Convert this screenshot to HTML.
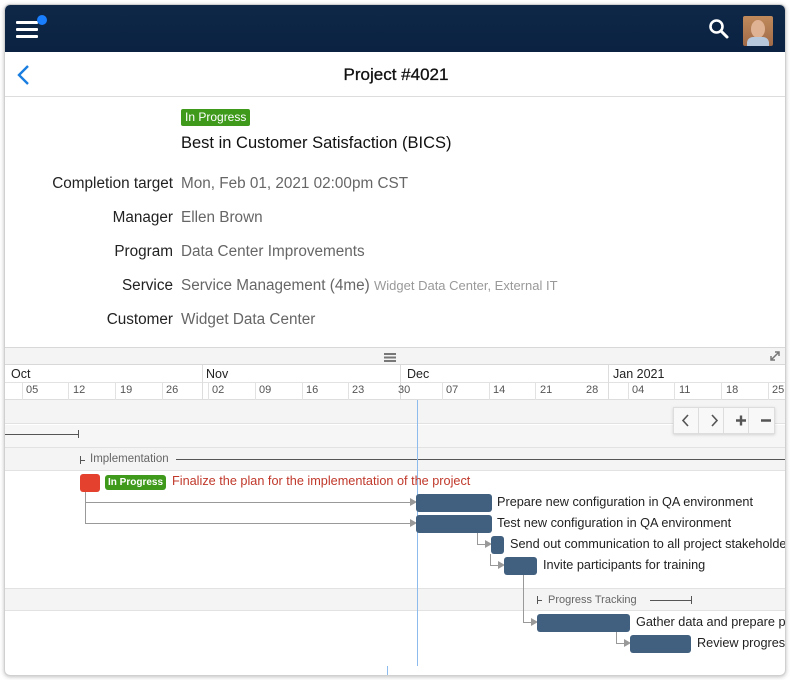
<!DOCTYPE html>
<html><head><meta charset="utf-8"><style>
*{margin:0;padding:0;box-sizing:border-box}
body{width:790px;height:680px;background:#fff;font-family:"Liberation Sans",sans-serif;position:relative;overflow:hidden}
.a{position:absolute;white-space:nowrap}
.card{position:absolute;left:4px;top:4px;width:782px;height:672px;border:1px solid #d0d0d0;border-radius:6px;overflow:hidden;box-shadow:0 1px 4px rgba(0,0,0,.25);background:#fff}
.lbl{position:absolute;right:612px;font-size:15.3px;color:#222}
.val{position:absolute;left:176px;font-size:15.3px;color:#666}
.wk{position:absolute;top:379px;font-size:11px;color:#555}
.tk{position:absolute;top:378px;width:1px;height:17px;background:#e2e2e2}
.bar{position:absolute;background:#41607f;border-radius:3px;height:18px}
.bt{position:absolute;font-size:12.7px;color:#222;white-space:nowrap}
.hl{position:absolute;height:1px;background:#999}
.vl{position:absolute;width:1px;background:#999}
.ar{position:absolute;width:0;height:0;border-top:4px solid transparent;border-bottom:4px solid transparent;border-left:7px solid #999}
</style></head><body>
<div class="card">
<div class="a" style="left:0;top:0;width:782px;height:47px;background:linear-gradient(#0f2848,#0b2242)"></div>
<div class="a" style="left:11px;top:16px;width:22px;height:3px;background:#fff;border-radius:1px"></div>
<div class="a" style="left:11px;top:23px;width:22px;height:3px;background:#fff;border-radius:1px"></div>
<div class="a" style="left:11px;top:30px;width:22px;height:3px;background:#fff;border-radius:1px"></div>
<div class="a" style="left:32px;top:10px;width:10px;height:10px;background:#1a7fff;border-radius:50%"></div>
<svg class="a" style="left:703px;top:13px" width="22" height="22" viewBox="0 0 22 22"><circle cx="8.5" cy="8.5" r="6" fill="none" stroke="#fff" stroke-width="2.6"/><line x1="13" y1="13" x2="19" y2="19" stroke="#fff" stroke-width="3" stroke-linecap="round"/></svg>
<div class="a" style="left:738px;top:11px;width:30px;height:30px;background:linear-gradient(#c08a5c,#a06a48);border-radius:2px;overflow:hidden">
<div class="a" style="left:8px;top:4px;width:14px;height:18px;background:#e0b294;border-radius:50%"></div>
<div class="a" style="left:4px;top:21px;width:22px;height:10px;background:#b8c8dc;border-radius:6px 6px 0 0"></div></div>
<svg class="a" style="left:11px;top:58px" width="16" height="24" viewBox="0 0 16 24"><path d="M12 3 L3 12 L12 21" fill="none" stroke="#1a7ee0" stroke-width="2.4"/></svg>
<div class="a" style="left:0;width:782px;top:60px;text-align:center;font-size:17px;color:#111;-webkit-text-stroke:0.3px #111">Project #4021</div>
<div class="a" style="left:0;top:91px;width:782px;height:1px;background:#ddd"></div>
<div class="a" style="left:176px;top:104px;background:#3f9a1c;color:#fff;font-size:12px;padding:1px 4px;border-radius:2px;line-height:15px">In Progress</div>
<div class="a" style="left:176px;top:129px;font-size:16.5px;color:#111">Best in Customer Satisfaction (BICS)</div>
<div class="lbl" style="top:170px">Completion target</div><div class="val" style="top:170px">Mon, Feb 01, 2021 02:00pm CST</div>
<div class="lbl" style="top:204px">Manager</div><div class="val" style="top:204px">Ellen Brown</div>
<div class="lbl" style="top:238px">Program</div><div class="val" style="top:238px">Data Center Improvements</div>
<div class="lbl" style="top:272px">Service</div><div class="val" style="top:272px">Service Management (4me) <span style="font-size:13px;color:#999">Widget Data Center, External IT</span></div>
<div class="lbl" style="top:306px">Customer</div><div class="val" style="top:306px">Widget Data Center</div>
<div class="a" style="left:0;top:342px;width:782px;height:18px;background:#f4f4f4;border-top:1px solid #d8d8d8;border-bottom:1px solid #d8d8d8"></div>
<div class="a" style="left:379px;top:348px;width:12px;height:1.5px;background:#777;box-shadow:0 3.5px 0 #777,0 7px 0 #777"></div>
<svg class="a" style="left:764px;top:345px" width="12" height="12"><path d="M2 10 L10 2 M6 2 H10 V6 M2 6 V10 H6" fill="none" stroke="#777" stroke-width="1.5"/></svg>
<div class="a" style="left:0;top:360px;width:782px;height:35px;background:#fff;border-bottom:1px solid #ddd"></div>
<div class="a" style="left:0;top:377px;width:782px;height:1px;background:#e2e2e2"></div>
<div class="a" style="left:197px;top:360px;width:1px;height:35px;background:#ddd"></div>
<div class="a" style="left:395px;top:360px;width:1px;height:35px;background:#ddd"></div>
<div class="a" style="left:603px;top:360px;width:1px;height:35px;background:#ddd"></div>
<div class="a" style="left:6px;top:362px;font-size:12.5px;color:#222">Oct</div>
<div class="a" style="left:201px;top:362px;font-size:12.5px;color:#222">Nov</div>
<div class="a" style="left:402px;top:362px;font-size:12.5px;color:#222">Dec</div>
<div class="a" style="left:608px;top:362px;font-size:12.5px;color:#222">Jan 2021</div>
<div class="tk" style="left:17px"></div><div class="wk" style="left:21px">05</div>
<div class="tk" style="left:63px"></div><div class="wk" style="left:68px">12</div>
<div class="tk" style="left:110px"></div><div class="wk" style="left:115px">19</div>
<div class="tk" style="left:157px"></div><div class="wk" style="left:161px">26</div>
<div class="tk" style="left:203px"></div><div class="wk" style="left:207px">02</div>
<div class="tk" style="left:250px"></div><div class="wk" style="left:254px">09</div>
<div class="tk" style="left:297px"></div><div class="wk" style="left:301px">16</div>
<div class="tk" style="left:343px"></div><div class="wk" style="left:347px">23</div>
<div class="wk" style="left:393px">30</div>
<div class="tk" style="left:437px"></div><div class="wk" style="left:441px">07</div>
<div class="tk" style="left:484px"></div><div class="wk" style="left:488px">14</div>
<div class="tk" style="left:530px"></div><div class="wk" style="left:535px">21</div>
<div class="wk" style="left:581px">28</div>
<div class="tk" style="left:623px"></div><div class="wk" style="left:627px">04</div>
<div class="tk" style="left:669px"></div><div class="wk" style="left:674px">11</div>
<div class="tk" style="left:716px"></div><div class="wk" style="left:721px">18</div>
<div class="tk" style="left:763px"></div><div class="wk" style="left:767px">25</div>
<div class="a" style="left:0;top:395px;width:782px;height:24px;background:#f4f4f4;border-bottom:1px solid #e2e2e2"></div>
<div class="a" style="left:0;top:420px;width:782px;height:23px;background:#f6f6f6;border-bottom:1px solid #e2e2e2"></div>
<div class="a" style="left:0;top:443px;width:782px;height:23px;background:#f4f4f4;border-bottom:1px solid #e2e2e2"></div>
<div class="a" style="left:0;top:583px;width:782px;height:23px;background:#f4f4f4;border-top:1px solid #e2e2e2;border-bottom:1px solid #e2e2e2"></div>
<div class="a" style="left:0;top:429px;width:74px;height:1px;background:#555"></div>
<div class="a" style="left:73px;top:425px;width:1px;height:8px;background:#555"></div>
<div class="a" style="left:75px;top:451px;width:1px;height:8px;background:#555"></div>
<div class="a" style="left:75px;top:455px;width:5px;height:1px;background:#555"></div>
<div class="a" style="left:85px;top:448px;font-size:11.5px;color:#666">Implementation</div>
<div class="a" style="left:171px;top:454px;width:611px;height:1px;background:#555"></div>
<div class="a" style="left:532px;top:591px;width:1px;height:8px;background:#555"></div>
<div class="a" style="left:532px;top:595px;width:5px;height:1px;background:#555"></div>
<div class="a" style="left:543px;top:589px;font-size:11px;color:#666">Progress Tracking</div>
<div class="a" style="left:645px;top:595px;width:41px;height:1px;background:#555"></div>
<div class="a" style="left:686px;top:591px;width:1px;height:8px;background:#555"></div>
<div class="a" style="left:412px;top:395px;width:1px;height:266px;background:#8dbbee"></div>
<div class="a" style="left:382px;top:661px;width:1px;height:12px;background:#8dbbee"></div>
<div class="a" style="left:668px;top:402px;width:102px;height:27px;background:#f8f8f8;border:1px solid #ddd;box-shadow:0 1px 3px rgba(0,0,0,.15)"></div>
<div class="a" style="left:693px;top:403px;width:1px;height:25px;background:#ddd"></div>
<div class="a" style="left:718px;top:403px;width:1px;height:25px;background:#ddd"></div>
<div class="a" style="left:743px;top:403px;width:1px;height:25px;background:#ddd"></div>
<svg class="a" style="left:668px;top:402px" width="102" height="27"><path d="M15 8 L10 13.5 L15 19 M39 8 L44 13.5 L39 19" fill="none" stroke="#555" stroke-width="1.6"/><path d="M63 13.5 H73 M68 8.5 V18.5 M88 13.5 H98" stroke="#555" stroke-width="2.4"/></svg>
<div class="vl" style="left:80px;top:486px;height:33px"></div>
<div class="hl" style="left:80px;top:497px;width:326px"></div><div class="ar" style="left:405px;top:493px"></div>
<div class="hl" style="left:80px;top:518px;width:326px"></div><div class="ar" style="left:405px;top:514px"></div>
<div class="vl" style="left:472px;top:528px;height:12px"></div>
<div class="hl" style="left:472px;top:539px;width:9px"></div><div class="ar" style="left:480px;top:535px"></div>
<div class="vl" style="left:485px;top:549px;height:12px"></div>
<div class="hl" style="left:485px;top:560px;width:9px"></div><div class="ar" style="left:493px;top:556px"></div>
<div class="vl" style="left:518px;top:570px;height:48px"></div>
<div class="hl" style="left:518px;top:617px;width:9px"></div><div class="ar" style="left:526px;top:613px"></div>
<div class="vl" style="left:611px;top:627px;height:12px"></div>
<div class="hl" style="left:611px;top:638px;width:9px"></div><div class="ar" style="left:619px;top:634px"></div>
<div class="a" style="left:75px;top:469px;width:20px;height:18px;background:#e4412e;border-radius:3px"></div>
<div class="a" style="left:100px;top:470px;background:#3f9a1c;color:#fff;font-size:10px;padding:1px 3px;border-radius:3px;line-height:13px;font-weight:bold">In Progress</div>
<div class="bt" style="left:167px;top:469px;color:#c0392b">Finalize the plan for the implementation of the project</div>
<div class="bar" style="left:411px;top:489px;width:76px"></div><div class="bt" style="left:492px;top:490px">Prepare new configuration in QA environment</div>
<div class="bar" style="left:411px;top:510px;width:76px"></div><div class="bt" style="left:492px;top:511px">Test new configuration in QA environment</div>
<div class="bar" style="left:486px;top:531px;width:13px"></div><div class="bt" style="left:505px;top:532px">Send out communication to all project stakeholders</div>
<div class="bar" style="left:499px;top:552px;width:33px"></div><div class="bt" style="left:538px;top:553px">Invite participants for training</div>
<div class="bar" style="left:532px;top:609px;width:93px"></div><div class="bt" style="left:631px;top:610px">Gather data and prepare progress report</div>
<div class="bar" style="left:625px;top:630px;width:61px"></div><div class="bt" style="left:692px;top:631px">Review progress</div>
</div>
</body></html>
